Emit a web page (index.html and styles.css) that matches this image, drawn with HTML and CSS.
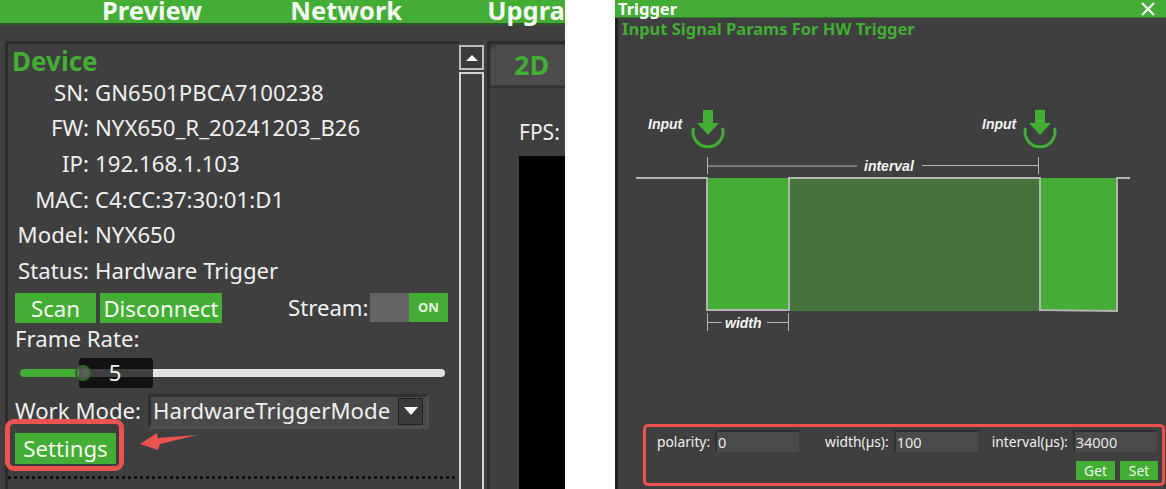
FILE: index.html
```html
<!DOCTYPE html>
<html lang="en">
<head>
    <meta charset="UTF-8">
    <meta name="viewport" content="width=device-width, initial-scale=1.0">
    <title>Trigger Settings</title>

    <link rel="stylesheet" href="styles.css">
</head>
<body>
    <div class="app">
        <nav class="top-nav">
            <span class="nav-preview">Preview</span>
            <span class="nav-network">Network</span>
            <span class="nav-upgrade">Upgra</span>
        </nav>

        <div class="workspace">
            <section class="device-panel">
                <h2 class="device-title">Device</h2>
                <div class="info-row"><span class="info-label">SN:</span><span>GN6501PBCA7100238</span></div>
                <div class="info-row"><span class="info-label">FW:</span><span>NYX650_R_20241203_B26</span></div>
                <div class="info-row"><span class="info-label">IP:</span><span>192.168.1.103</span></div>
                <div class="info-row"><span class="info-label">MAC:</span><span>C4:CC:37:30:01:D1</span></div>
                <div class="info-row"><span class="info-label">Model:</span><span>NYX650</span></div>
                <div class="info-row"><span class="info-label">Status:</span><span>Hardware Trigger</span></div>

                <div class="action-row">
                    <button class="btn-green btn-scan">Scan</button>
                    <button class="btn-green btn-disconnect">Disconnect</button>
                    <span class="stream-label">Stream:</span>
                    <div class="toggle">
                        <span class="toggle-off"></span>
                        <span class="toggle-on">ON</span>
                    </div>
                </div>

                <div class="frame-label">Frame Rate:</div>
                <div class="slider">
                    <div class="slider-fill"></div>
                    <div class="slider-rest"></div>
                    <div class="slider-value">5</div>
                    <div class="slider-handle"></div>
                </div>

                <div class="mode-row">
                    <span>Work Mode:</span>
                    <div class="combo">
                        <span>HardwareTriggerMode</span>
                        <span class="combo-arrow"></span>
                    </div>
                </div>

                <button class="btn-green btn-settings">Settings</button>
                <div class="divider"></div>

                <div class="settings-mark"></div>
                <svg class="settings-arrow" width="60" height="18" viewBox="0 0 60 18">
                    <path d="M0 11 L17 0 L18 5 L57 2 L20 11 L18 17 Z" fill="#ea5350"/>
                </svg>
            </section>

            <div class="scrollbar">
                <div class="scroll-btn"><span class="scroll-up"></span></div>
                <div class="scroll-track"></div>
            </div>

            <section class="view-panel">
                <div class="tab-bar"><div class="tab">2D</div></div>
                <div class="fps">FPS:</div>
                <div class="video"></div>
            </section>
        </div>
    </div>

    <div class="dialog">
        <header class="dialog-title">
            <span>Trigger</span>
            <svg width="14" height="14" viewBox="0 0 14 14">
                <path d="M1 1 L13 13 M13 1 L1 13" stroke="#fff" stroke-width="2"/>
            </svg>
        </header>

        <div class="dialog-body">
            <h3 class="dialog-heading">Input Signal Params For HW Trigger</h3>

            <svg class="diagram" width="548" height="300" viewBox="618 40 548 300">
                <rect x="707" y="178" width="82" height="132" fill="#43ad35"/>
                <rect x="789" y="178" width="251" height="133" fill="#46733c"/>
                <rect x="1040" y="178" width="77" height="132" fill="#43ad35"/>
                <path d="M636 178 H707 V310 H789 V178 H1040 V310 L1117 311 V178 H1130" fill="none" stroke="#b4b4b4" stroke-width="2"/>

                <g fill="none" stroke="#43ad35" stroke-width="3">
                    <path d="M693.500 128 A15 15 0 1 0 722.500 128"/>
                    <path d="M1025.500 128 A15 15 0 1 0 1054.500 128"/>
                </g>
                <g fill="#43ad35">
                    <path d="M703 110 H713 V123 H719 L708 135 L697 123 H703 Z"/>
                    <path d="M1035 110 H1045 V123 H1051 L1040 135 L1029 123 H1035 Z"/>
                </g>

                <g fill="none" stroke="#b5b5b5" stroke-width="1">
                    <path d="M707.500 157 V174 M707.500 166 H857 M922 165.500 H1038 M1038.500 157 V174"/>
                    <path d="M707.500 313 V331 M707.500 322.500 H722 M767 322.500 H788 M788.500 313 V331"/>
                </g>

                <g class="diagram-text">
                    <text x="648" y="129">Input</text>
                    <text x="982" y="129">Input</text>
                    <text x="864" y="171">interval</text>
                    <text x="725" y="328">width</text>
                </g>
            </svg>

            <div class="params">
                <div class="param-row">
                    <label class="param-polarity">polarity:</label>
                    <input class="param-input" value="0">
                    <label class="param-width">width(µs):</label>
                    <input class="param-input" value="100">
                    <label class="param-interval">interval(µs):</label>
                    <input class="param-input" value="34000">
                </div>
                <div class="param-buttons">
                    <button class="btn-small btn-get">Get</button>
                    <button class="btn-small btn-set">Set</button>
                </div>
            </div>
        </div>
    </div>
</body>
</html>
```

FILE: styles.css
```css
* {
    margin: 0;
    padding: 0;
    box-sizing: border-box;
}

body {
    font-family: "Noto Sans", "Open Sans", sans-serif;
    background: #fff;
    width: 1166px;
    height: 489px;
    overflow: hidden;
    display: flex;
    gap: 50px;
    color: #f0f0f0;
}

/* left window */
.app {
    width: 565px;
    height: 489px;
    background: #3f3f3f;
    overflow: hidden;
    flex-shrink: 0;
}

.top-nav {
    height: 25px;
    background: #43ad35;
    border-bottom: 2px solid #2a5a25;
    display: flex;
    align-items: flex-end;
    font-size: 25.500px;
    font-weight: bold;
    line-height: 23px;
    color: #f4faf0;
    white-space: nowrap;
}

.nav-preview {
    margin-left: 102px;
    margin-bottom: 1px;
}

.nav-network {
    margin-left: 88px;
    margin-bottom: 1px;
}

.nav-upgrade {
    margin-left: 85px;
    margin-bottom: 1px;
}

.workspace {
    display: flex;
    padding: 16px 0 0 5px;
    height: 464px;
}

.device-panel {
    position: relative;
    width: 454px;
    height: 448px;
    border: 3px solid #2d2d2d;
    border-right: none;
    border-bottom: none;
    flex-shrink: 0;
    font-size: 22.200px;
    line-height: 30px;
}

.device-title {
    font-size: 26px;
    line-height: 30px;
    font-weight: bold;
    color: #43ad35;
    margin: 2px 0 -1px 4px;
}

.info-row {
    display: flex;
    gap: 6px;
    height: 35.600px;
    align-items: center;
    white-space: nowrap;
}

.info-label {
    width: 81px;
    text-align: right;
}

.action-row {
    display: flex;
    align-items: center;
    margin: 4px 0 0 7px;
    width: 433px;
    height: 30px;
}

.btn-green {
    background: #43ad35;
    color: #f4faf0;
    border: none;
    font-family: inherit;
    font-size: 22.200px;
    height: 30px;
}

.btn-scan {
    width: 81px;
}

.btn-disconnect {
    width: 122px;
    margin-left: 4px;
}

.stream-label {
    margin-left: 66px;
}

.toggle {
    display: flex;
    margin-left: auto;
    height: 29px;
}

.toggle-off {
    width: 39px;
    background: #656565;
}

.toggle-on {
    width: 39px;
    background: #43ad35;
    font-size: 13px;
    font-weight: bold;
    line-height: 29px;
    text-align: center;
    color: #e4f4df;
}

.frame-label {
    margin: 1px 0 0 7px;
}

.slider {
    position: relative;
    display: flex;
    align-items: center;
    margin: 4px 0 0 12px;
    width: 425px;
    height: 30px;
}

.slider-fill {
    width: 63px;
    height: 8px;
    background: #43ad35;
    border-radius: 4px 0 0 4px;
}

.slider-rest {
    flex: 1;
    height: 8px;
    background: #e2e2e2;
    border-radius: 0 4px 4px 0;
}

.slider-handle {
    position: absolute;
    left: 55px;
    top: 7px;
    width: 16px;
    height: 16px;
    border-radius: 50%;
    background: rgba(110, 110, 110, 0.7);
    border: 2px solid #2c6a25;
}

.slider-value {
    position: absolute;
    left: 59px;
    top: 0;
    width: 74px;
    height: 30px;
    border-radius: 3px;
    background: rgba(0, 0, 0, 0.72);
    text-align: center;
    padding-right: 2px;
}

.mode-row {
    display: flex;
    align-items: center;
    justify-content: space-between;
    margin: 6px 0 0 7px;
    width: 414px;
    height: 35px;
    white-space: nowrap;
}

.combo {
    width: 281px;
    height: 35px;
    background: #4a4a4a;
    border: 3px solid #303030;
    border-right-color: #505050;
    border-bottom-color: #505050;
    display: flex;
    align-items: center;
    justify-content: space-between;
    padding: 0 3px 0 2px;
}

.combo-arrow {
    width: 25px;
    height: 27px;
    background: #3a3a3a;
    border: 1px solid #222;
    display: flex;
    align-items: center;
    justify-content: center;
}

.combo-arrow::before {
    content: '';
    border-left: 7px solid transparent;
    border-right: 7px solid transparent;
    border-top: 8px solid #fff;
}

.btn-settings {
    display: block;
    width: 101px;
    height: 31px;
    margin: 4px 0 0 7px;
}

.divider {
    margin: 12px 0 0 0;
    width: 447px;
    border-top: 3px dotted #111;
}

.settings-mark {
    position: absolute;
    left: -3px;
    top: 375px;
    width: 119px;
    height: 52px;
    border: 5px solid #ea5350;
    border-radius: 9px;
}

.settings-arrow {
    position: absolute;
    left: 132px;
    top: 389px;
}

.scrollbar {
    width: 25px;
    margin-left: 0;
    padding-top: 4px;
    flex-shrink: 0;
}

.scroll-btn {
    height: 25px;
    border: 2px solid #bdbdbd;
    background: #3a3a3a;
    display: flex;
    align-items: center;
    justify-content: center;
}

.scroll-up {
    border-left: 6px solid transparent;
    border-right: 6px solid transparent;
    border-bottom: 6px solid #fff;
}

.scroll-track {
    height: 420px;
    margin-top: 2px;
    border: 2px solid #d4d4d4;
    border-bottom: none;
}

.view-panel {
    flex: 1;
    margin-left: 3px;
    border-left: 3px solid #2d2d2d;
    border-top: 3px solid #2d2d2d;
    overflow: hidden;
}

.tab-bar {
    height: 43px;
    border-bottom: 2px solid #333;
    padding-left: 1px;
}

.tab {
    height: 40px;
    margin-top: 1px;
    background: #4b4b4b;
    border-radius: 8px 0 0 0;
    color: #43ad35;
    font-size: 27px;
    font-weight: bold;
    line-height: 40px;
    padding-left: 23px;
}

.fps {
    margin: 29px 0 0 29px;
    font-size: 21px;
    line-height: 30px;
}

.video {
    height: 340px;
    margin: 9px 0 0 29px;
    background: #000;
}

/* right window */
.dialog {
    width: 551px;
    height: 489px;
    background: #3f3f3f;
    display: flex;
    flex-direction: column;
    flex-shrink: 0;
}

.dialog-title {
    height: 18px;
    background: #43ad35;
    border-bottom: 1px solid #2f7a26;
    display: flex;
    align-items: center;
    justify-content: space-between;
    padding: 0 11px 0 3px;
    font-size: 16.500px;
    font-weight: bold;
    color: #fff;
    line-height: 15px;
}

.dialog-body {
    flex: 1;
    display: flex;
    flex-direction: column;
    min-height: 0;
    border-left: 3px solid #222;
}

.dialog-heading {
    font-size: 16.500px;
    font-weight: bold;
    color: #43ad35;
    line-height: 22px;
    margin-left: 4px;
}

.diagram {
    display: block;
    flex-shrink: 0;
}

.diagram-text {
    font-family: "Liberation Sans", Arial, sans-serif;
    font-size: 14px;
    font-weight: bold;
    font-style: italic;
    fill: #f4f4f4;
}

.params {
    margin: auto 1px 3px 25px;
    height: 62px;
    border: 3px solid #ea5350;
    border-radius: 5px;
    padding: 3px 4px 0 11px;
    font-size: 13.800px;
}

.param-row {
    display: flex;
    align-items: center;
    height: 22px;
    white-space: nowrap;
}

.param-input {
    width: 84px;
    height: 22px;
    background: #4a4a4a;
    border: none;
    border-top: 2px solid #303030;
    border-left: 2px solid #303030;
    color: #e8e8e8;
    font-family: inherit;
    font-size: 14.500px;
    padding-left: 1px;
    margin-left: 5px;
}

.param-width {
    margin-left: 26px;
}

.param-interval {
    margin-left: 14px;
}

.param-buttons {
    display: flex;
    justify-content: flex-end;
    gap: 5px;
    margin-top: 9px;
}

.btn-small {
    background: #43ad35;
    color: #f0f8ec;
    border: none;
    font-family: inherit;
    font-size: 13.800px;
    height: 19px;
    line-height: 19px;
}

.btn-get {
    width: 39px;
}

.btn-set {
    width: 38px;
}
```
